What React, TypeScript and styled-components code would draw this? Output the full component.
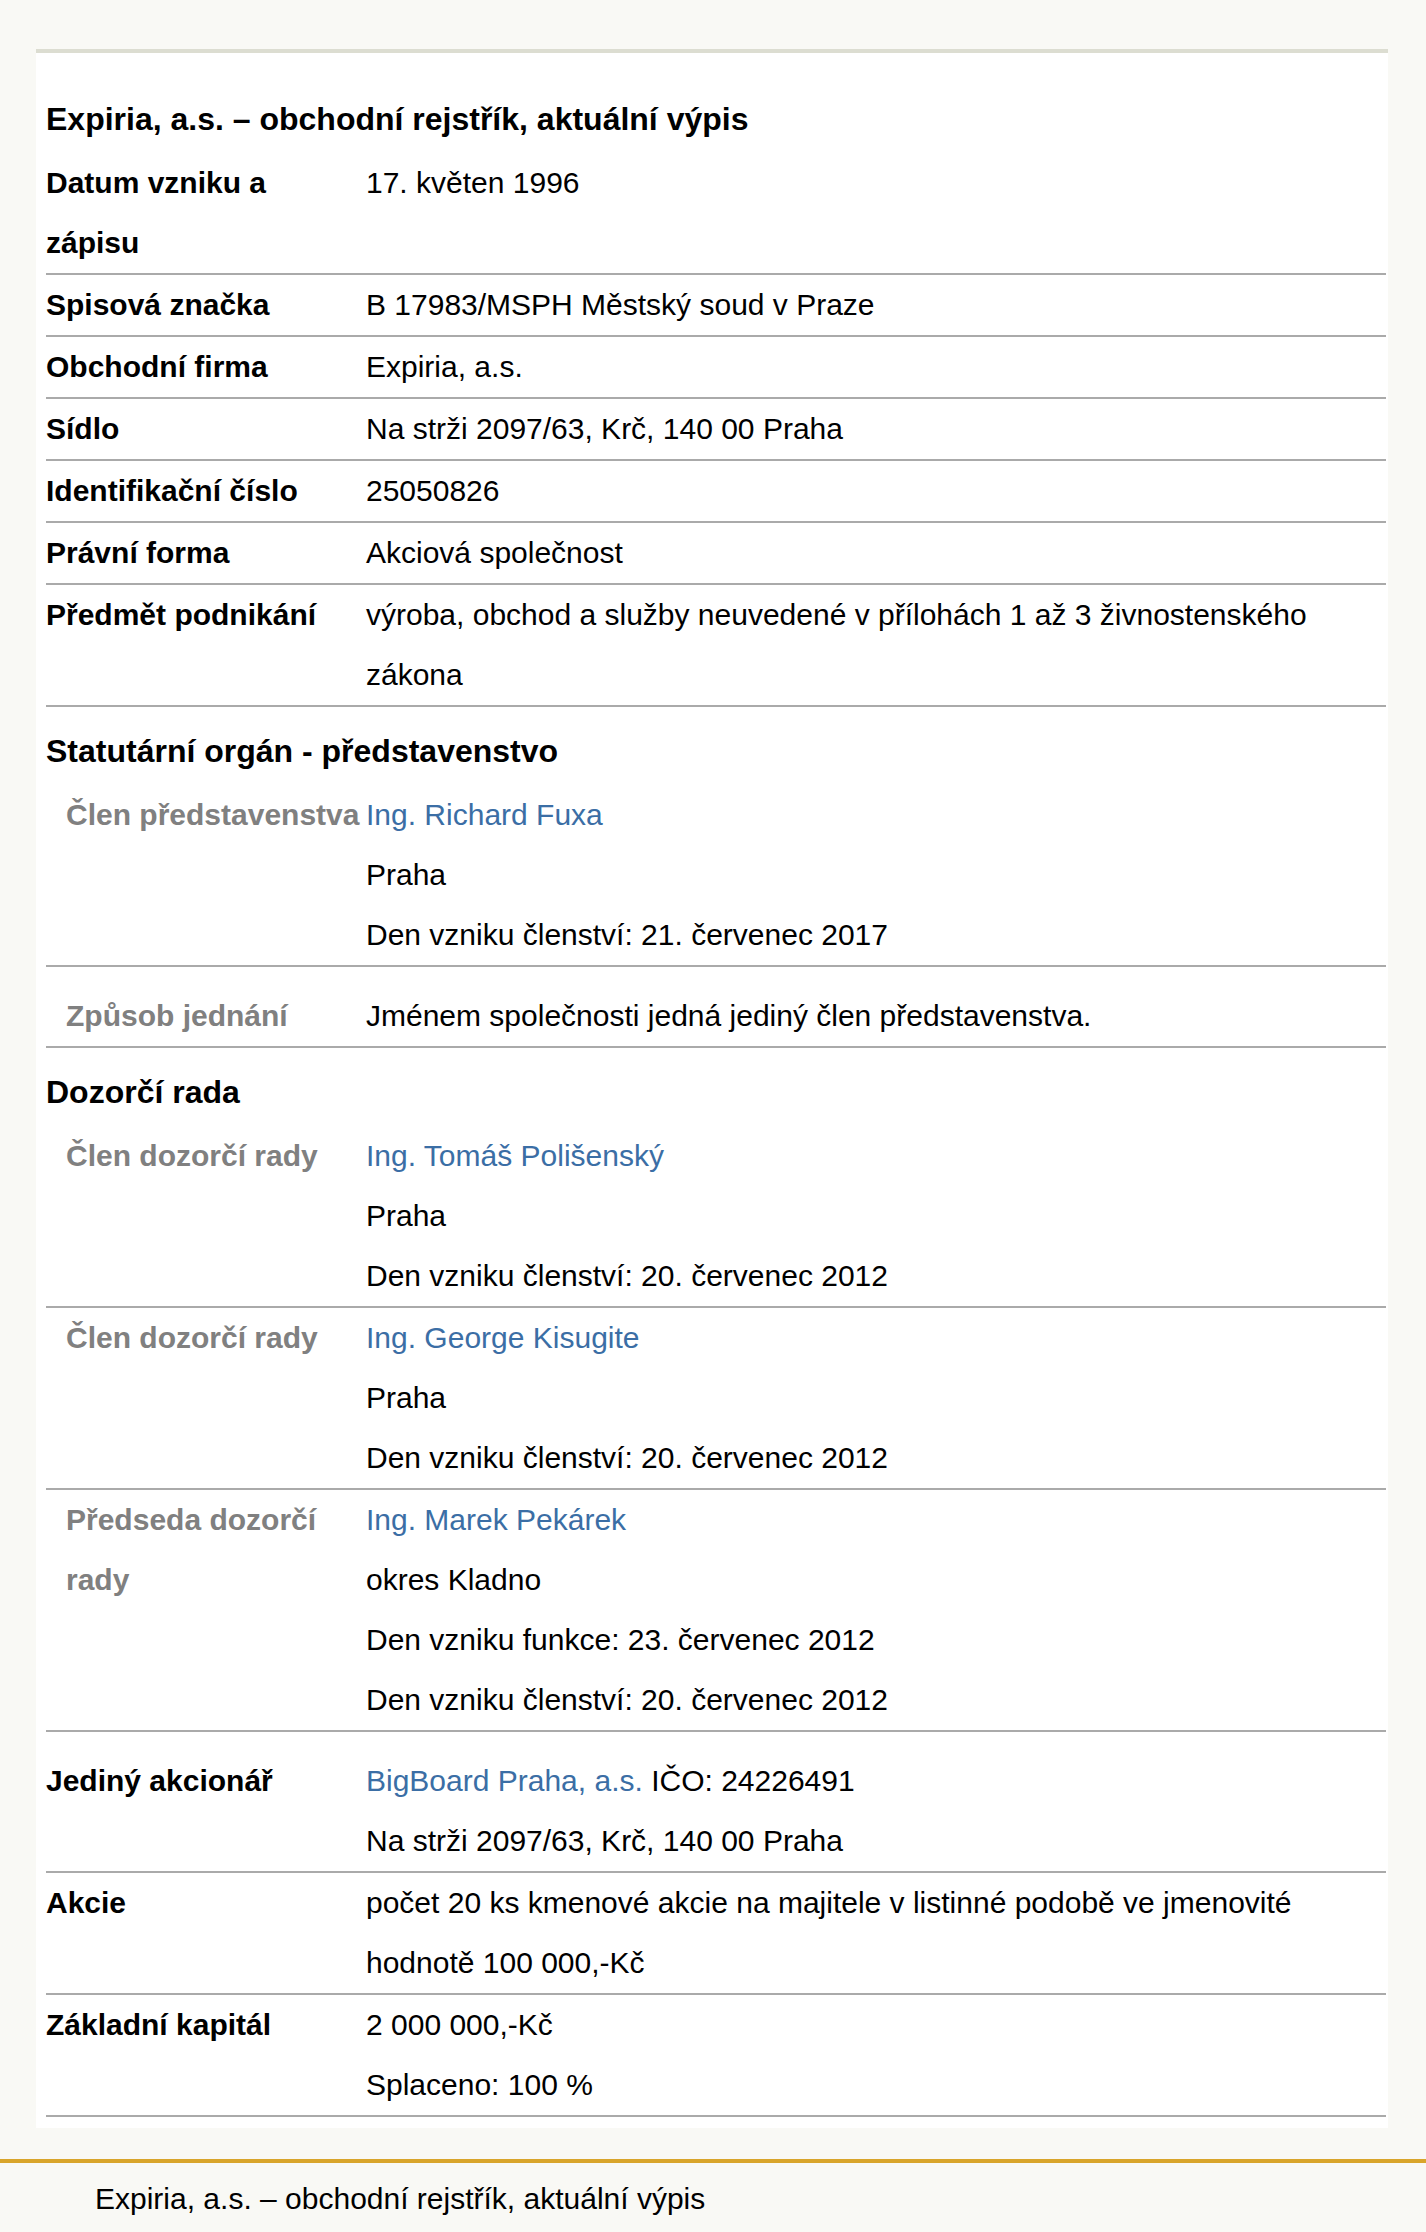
import React from "react";
import styled, { createGlobalStyle } from "styled-components";

const GlobalStyle = createGlobalStyle`
  html, body {
    margin: 0;
    padding: 0;
    background: #f9f9f5;
  }
  body {
    font-family: "Liberation Sans", Arial, sans-serif;
    color: #000;
  }
`;

const Card = styled.main`
  margin: 49px 38px 0 36px;
  padding: 22px 2px 11px 10px;
  background: #fff;
  border-top: 4px solid #dcddd1;
`;

const Heading = styled.h2`
  margin: 0;
  padding: 14px 0 4px;
  font-size: 32px;
  font-weight: bold;
  line-height: 60px;
`;

const Row = styled.div<{ $spaced?: boolean }>`
  display: grid;
  grid-template-columns: 320px 1fr;
  padding-top: ${(p) => (p.$spaced ? "19px" : "0")};
  border-bottom: 2px solid #aaa;
  font-size: 30px;
  line-height: 60px;
`;

const Label = styled.div<{ $sub?: boolean }>`
  padding: 0 5px 0 ${(p) => (p.$sub ? "20px" : "0")};
  font-weight: bold;
  color: ${(p) => (p.$sub ? "#808080" : "#000")};
`;

const Value = styled.div`
  min-width: 0;
`;

const Line = styled.div``;

const Link = styled.a`
  color: #3b6ea5;
  text-decoration: none;
`;

const Footer = styled.footer`
  margin-top: 31px;
  padding: 19px 0 19px 95px;
  border-top: 4px solid #d9a52b;
  font-size: 30px;
  line-height: 34px;
`;

type Item = {
  label: string;
  lines: React.ReactNode[];
  sub?: boolean;
  spaced?: boolean;
};

const basics: Item[] = [
  { label: "Datum vzniku a zápisu", lines: ["17. květen 1996"] },
  { label: "Spisová značka", lines: ["B 17983/MSPH Městský soud v Praze"] },
  { label: "Obchodní firma", lines: ["Expiria, a.s."] },
  { label: "Sídlo", lines: ["Na strži 2097/63, Krč, 140 00 Praha"] },
  { label: "Identifikační číslo", lines: ["25050826"] },
  { label: "Právní forma", lines: ["Akciová společnost"] },
  {
    label: "Předmět podnikání",
    lines: ["výroba, obchod a služby neuvedené v přílohách 1 až 3 živnostenského zákona"],
  },
];

const board: Item[] = [
  {
    label: "Člen představenstva",
    sub: true,
    lines: [
      <Link href="#">Ing. Richard Fuxa</Link>,
      "Praha",
      "Den vzniku členství: 21. červenec 2017",
    ],
  },
  {
    label: "Způsob jednání",
    sub: true,
    spaced: true,
    lines: ["Jménem společnosti jedná jediný člen představenstva."],
  },
];

const supervisory: Item[] = [
  {
    label: "Člen dozorčí rady",
    sub: true,
    lines: [
      <Link href="#">Ing. Tomáš Polišenský</Link>,
      "Praha",
      "Den vzniku členství: 20. červenec 2012",
    ],
  },
  {
    label: "Člen dozorčí rady",
    sub: true,
    lines: [
      <Link href="#">Ing. George Kisugite</Link>,
      "Praha",
      "Den vzniku členství: 20. červenec 2012",
    ],
  },
  {
    label: "Předseda dozorčí rady",
    sub: true,
    lines: [
      <Link href="#">Ing. Marek Pekárek</Link>,
      "okres Kladno",
      "Den vzniku funkce: 23. červenec 2012",
      "Den vzniku členství: 20. červenec 2012",
    ],
  },
];

const capital: Item[] = [
  {
    label: "Jediný akcionář",
    spaced: true,
    lines: [
      <>
        <Link href="#">BigBoard Praha, a.s.</Link> IČO: 24226491
      </>,
      "Na strži 2097/63, Krč, 140 00 Praha",
    ],
  },
  {
    label: "Akcie",
    lines: [
      "počet 20 ks kmenové akcie na majitele v listinné podobě ve jmenovité hodnotě 100 000,-Kč",
    ],
  },
  { label: "Základní kapitál", lines: ["2 000 000,-Kč", "Splaceno: 100 %"] },
];

const Rows: React.FC<{ items: Item[] }> = ({ items }) => (
  <>
    {items.map((item, i) => (
      <Row key={i} $spaced={item.spaced}>
        <Label $sub={item.sub}>{item.label}</Label>
        <Value>
          {item.lines.map((line, j) => (
            <Line key={j}>{line}</Line>
          ))}
        </Value>
      </Row>
    ))}
  </>
);

const title = "Expiria, a.s. – obchodní rejstřík, aktuální výpis";

export default function App() {
  return (
    <>
      <GlobalStyle />
      <Card>
        <Heading as="h1">{title}</Heading>
        <Rows items={basics} />
        <Heading>Statutární orgán - představenstvo</Heading>
        <Rows items={board} />
        <Heading>Dozorčí rada</Heading>
        <Rows items={supervisory} />
        <Rows items={capital} />
      </Card>
      <Footer>{title}</Footer>
    </>
  );
}
